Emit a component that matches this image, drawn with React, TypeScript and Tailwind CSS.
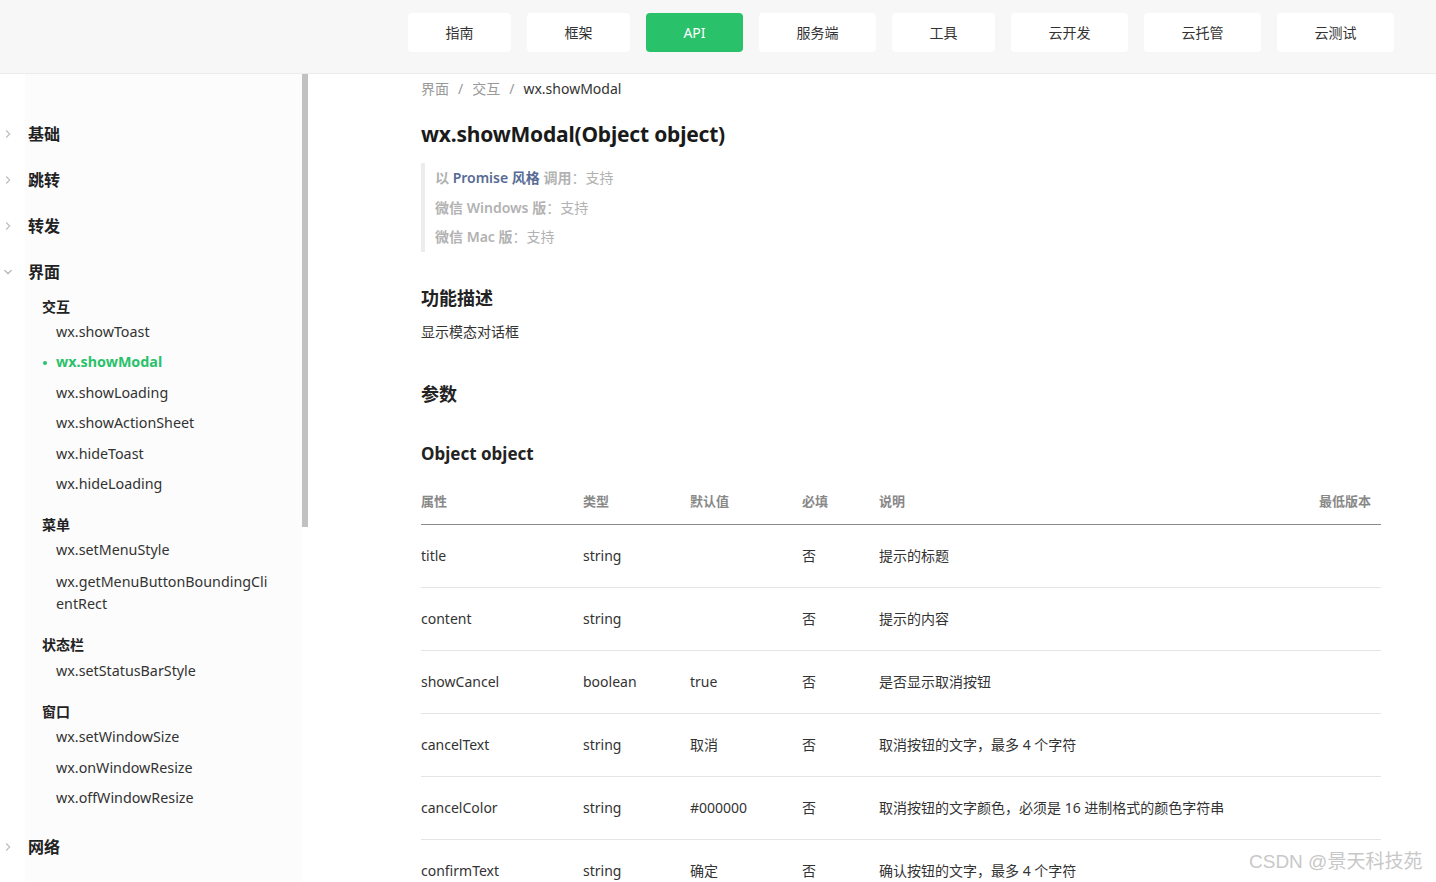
import React from "react";

const NAV: [string, number][] = [
  ["指南", 103],
  ["框架", 103],
  ["API", 97],
  ["服务端", 117],
  ["工具", 103],
  ["云开发", 117],
  ["云托管", 117],
  ["云测试", 117],
];

const ROWS: [string, string, string, string, string][] = [
  ["title", "string", "", "否", "提示的标题"],
  ["content", "string", "", "否", "提示的内容"],
  ["showCancel", "boolean", "true", "否", "是否显示取消按钮"],
  ["cancelText", "string", "取消", "否", "取消按钮的文字，最多 4 个字符"],
  ["cancelColor", "string", "#000000", "否", "取消按钮的文字颜色，必须是 16 进制格式的颜色字符串"],
  ["confirmText", "string", "确定", "否", "确认按钮的文字，最多 4 个字符"],
];

function Chevron({ down }: { down?: boolean }) {
  return (
    <svg width="10" height="10" viewBox="0 0 10 10" className="absolute left-[3px] top-1/2 -translate-y-1/2">
      {down ? (
        <path d="M1.5 3.2 L5 6.7 L8.5 3.2" fill="none" stroke="#aaaaaa" strokeWidth="1.1" />
      ) : (
        <path d="M3.2 1.5 L6.7 5 L3.2 8.5" fill="none" stroke="#bcbcbc" strokeWidth="1.1" />
      )}
    </svg>
  );
}

function Top({ label, down }: { label: string; down?: boolean }) {
  return (
    <div className="relative h-[46px] flex items-center pl-[28px] text-[16px] font-bold text-[#222]">
      <Chevron down={down} />
      {label}
    </div>
  );
}

function Group({ label }: { label: string }) {
  return <div className="pl-[42px] h-[22px] flex items-center text-[14px] font-bold text-[#222]">{label}</div>;
}

function Item({ label, active }: { label: string; active?: boolean }) {
  return (
    <div
      className={
        "relative pl-[56px] pr-[30px] py-[5px] leading-[20.4px] text-[14.3px] " +
        (active ? "text-[#2ac16b] font-bold" : "text-[#333]")
      }
    >
      {active && <span className="absolute left-[43px] top-[14px] w-[4px] h-[4px] rounded-full bg-[#2ac16b]" />}
      {label}
    </div>
  );
}

export default function App() {
  const font = { fontFamily: '"Noto Sans", "Noto Sans CJK SC", sans-serif' };
  return (
    <div className="w-[1436px] h-[882px] overflow-hidden bg-white relative" style={font}>
      <header className="h-[74px] bg-[#f7f7f7] border-b border-[#ebebeb] flex items-start pt-[13px] pl-[408px] gap-[16px]">
        {NAV.map(([n, w]) => (
          <div
            key={n}
            style={{ width: w }}
            className={
              "h-[39px] flex items-center justify-center rounded-[4px] text-[14px] " +
              (n === "API" ? "bg-[#2ac16b] text-white" : "bg-white text-[#333]")
            }
          >
            {n}
          </div>
        ))}
      </header>

      <div className="flex">
        <aside className="w-[302px] shrink-0 h-[808px] relative">
          <div className="absolute left-[25px] top-0 bottom-0 right-0 bg-[#fcfcfc]" />
          <div className="relative pt-[37px]">
            <Top label="基础" />
            <Top label="跳转" />
            <Top label="转发" />
            <Top label="界面" down />
            <Group label="交互" />
            <Item label="wx.showToast" />
            <Item label="wx.showModal" active />
            <Item label="wx.showLoading" />
            <Item label="wx.showActionSheet" />
            <Item label="wx.hideToast" />
            <Item label="wx.hideLoading" />
            <div className="h-[14px]" />
            <Group label="菜单" />
            <Item label="wx.setMenuStyle" />
            <div className="relative pl-[56px] pr-[34px] py-[5px] leading-[22px] text-[14.3px] text-[#333] break-all">
              wx.getMenuButtonBoundingClientRect
            </div>
            <div className="h-[14px]" />
            <Group label="状态栏" />
            <Item label="wx.setStatusBarStyle" />
            <div className="h-[14px]" />
            <Group label="窗口" />
            <Item label="wx.setWindowSize" />
            <Item label="wx.onWindowResize" />
            <Item label="wx.offWindowResize" />
            <div className="h-[11px]" />
            <Top label="网络" />
          </div>
        </aside>
        <div className="w-[6px] shrink-0">
          <div className="h-[453px] bg-[#c1c1c1]" />
        </div>

        <main className="pl-[113px] w-[1073px] shrink-0">
          <div className="pt-[1px] h-[28px] flex items-center text-[14px] text-[#999]">
            <span>界面</span>
            <span className="mx-[9px]">/</span>
            <span>交互</span>
            <span className="mx-[9px]">/</span>
            <span className="text-[#333]">wx.showModal</span>
          </div>
          <h1 className="mt-[17px] text-[21px] tracking-[-0.2px] font-bold text-[#1a1a1a] leading-[30px]">
            wx.showModal(Object object)
          </h1>
          <div className="mt-[14px] border-l-[4px] border-[#ececec] pl-[10px] text-[14px] text-[#b2b2b2] leading-[29.5px]">
            <div>
              <span className="font-semibold">以 </span>
              <span className="font-semibold text-[#576b95]">Promise 风格</span>
              <span className="font-semibold"> 调用</span>：支持
            </div>
            <div>
              <span className="font-semibold">微信 Windows 版</span>：支持
            </div>
            <div>
              <span className="font-semibold">微信 Mac 版</span>：支持
            </div>
          </div>
          <h2 className="mt-[33px] text-[18px] font-bold text-[#222] leading-[26px]">功能描述</h2>
          <p className="mt-[11px] text-[14px] text-[#333] leading-[20px]">显示模态对话框</p>
          <h2 className="mt-[39px] text-[18px] font-bold text-[#222] leading-[26px]">参数</h2>
          <h3 className="mt-[34px] text-[17px] font-bold text-[#222] leading-[26px]">Object object</h3>
          <div className="mt-[13px] w-[960px]">
            <div className="flex items-center h-[45px] border-b border-[#8a8a8a] text-[13px] font-bold text-[#888]">
              <div className="w-[162px]">属性</div>
              <div className="w-[107px]">类型</div>
              <div className="w-[112px]">默认值</div>
              <div className="w-[77px]">必填</div>
              <div className="flex-1">说明</div>
              <div className="pr-[10px]">最低版本</div>
            </div>
            {ROWS.map((r) => (
              <div key={r[0]} className="flex items-center h-[63px] border-b border-[#e5e5e5] text-[14px] text-[#333]">
                <div className="w-[162px]">{r[0]}</div>
                <div className="w-[107px]">{r[1]}</div>
                <div className="w-[112px]">{r[2]}</div>
                <div className="w-[77px]">{r[3]}</div>
                <div className="flex-1">{r[4]}</div>
              </div>
            ))}
          </div>
        </main>
      </div>

      <div
        className="absolute left-[1249px] top-[848px] text-[19px] text-[#c8c8c8] leading-[28px]"
        style={{ fontFamily: '"Liberation Sans", "Noto Sans CJK SC", sans-serif' }}
      >
        CSDN @景天科技苑
      </div>
    </div>
  );
}
